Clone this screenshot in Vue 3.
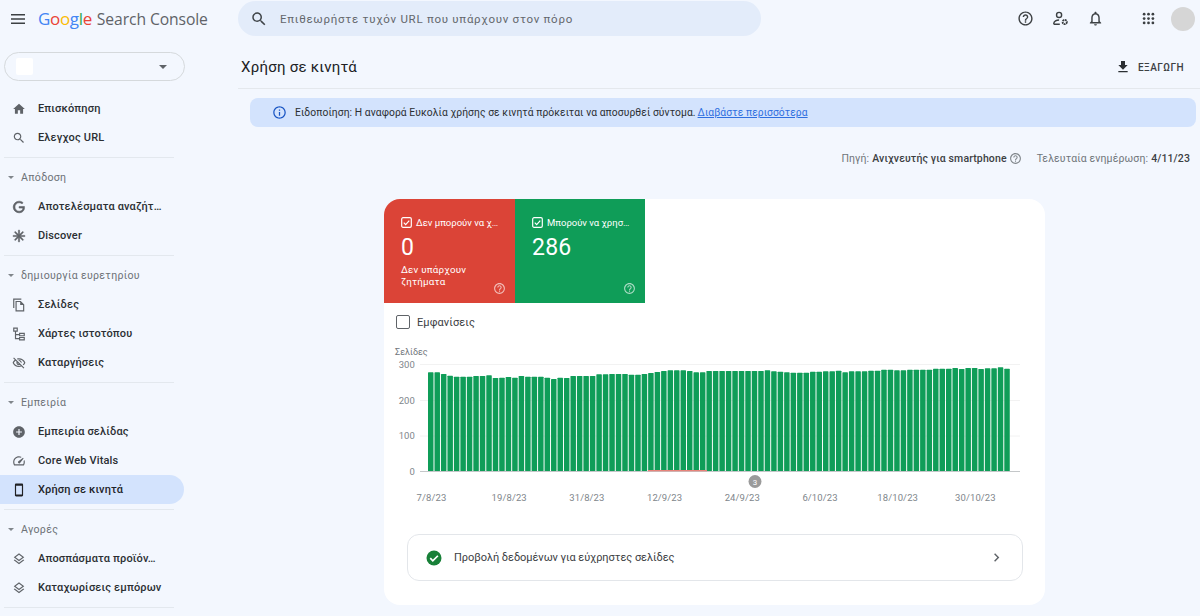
<script setup>
const I = {
  home: 'M10 20v-6h4v6h5v-8h3L12 3 2 12h3v8z',
  search: 'M15.5 14h-.79l-.28-.27C15.41 12.59 16 11.11 16 9.5 16 5.91 13.09 3 9.5 3S3 5.91 3 9.5 5.91 16 9.5 16c1.61 0 3.09-.59 4.23-1.57l.27.28v.79l5 4.99L20.49 19l-4.99-5zm-6 0C7.01 14 5 11.99 5 9.5S7.01 5 9.5 5 14 7.01 14 9.5 11.99 14 9.5 14z',
  g: 'M21.35 11.1h-9.17v2.73h6.51c-.33 3.81-3.5 5.44-6.5 5.44C8.36 19.27 5 16.25 5 12c0-4.1 3.2-7.27 7.2-7.27 3.09 0 4.9 1.97 4.9 1.97L19 4.72S16.56 2 12.1 2C6.42 2 2.03 6.8 2.03 12c0 5.05 4.13 10 10.22 10 5.35 0 9.25-3.67 9.25-9.09 0-1.15-.15-1.81-.15-1.81z',
  star: 'M11 2h2v7.6l5.4-5.4 1.4 1.4-5.4 5.4H22v2h-7.6l5.4 5.4-1.4 1.4-5.4-5.4V22h-2v-7.6l-5.4 5.4-1.4-1.4 5.4-5.4H2v-2h7.6L4.2 5.6l1.4-1.4L11 9.6z',
  copy: 'M16 1H2v16h2V3h12V1zm-1 4H6v18h15V11l-6-6zM8 21V7h6v5h5v9H8z',
  map: 'M2 1h8v7H7v4h5v-2h10v6H12v-2H7v5h5v-2h10v6H12v-2H5V8H2V1zm2 2v3h4V3H4zm10 9v2h6v-2h-6zm0 7v2h6v-2h-6z',
  eye: 'M12 6c3.79 0 7.17 2.13 8.82 5.5-.59 1.22-1.42 2.27-2.41 3.12l1.41 1.41c1.39-1.23 2.49-2.77 3.18-4.53C21.27 7.11 17 4 12 4c-1.27 0-2.49.2-3.64.57l1.65 1.65C10.66 6.09 11.32 6 12 6zm-1.07 1.14L13 9.21c.57.25 1.03.71 1.28 1.28l2.07 2.07c.08-.34.14-.7.14-1.07C16.5 9.01 14.48 7 12 7c-.37 0-.72.05-1.07.14zM2.01 3.87l2.68 2.68C3.06 7.83 1.77 9.53 1 11.5 2.73 15.89 7 19 12 19c1.52 0 2.98-.29 4.32-.82l3.42 3.42 1.41-1.41L3.42 2.45 2.01 3.87zm7.5 7.5l2.61 2.61c-.04.01-.08.02-.12.02-1.38 0-2.5-1.12-2.5-2.5 0-.05.01-.08.01-.13zm-3.4-3.4l1.75 1.75c-.23.55-.36 1.15-.36 1.78 0 2.48 2.02 4.5 4.5 4.5.63 0 1.23-.13 1.77-.36l.98.98c-.88.24-1.8.38-2.75.38-3.79 0-7.17-2.13-8.82-5.5.7-1.43 1.72-2.61 2.93-3.53z',
  add: 'M12 2C6.48 2 2 6.48 2 12s4.48 10 10 10 10-4.48 10-10S17.52 2 12 2zm5 11h-4v4h-2v-4H7v-2h4V7h2v4h4v2z',
  speed: 'M12 4C6.5 4 2 8.5 2 14c0 1.9.5 3.6 1.4 5.1l.3.4h16.6l.3-.4C21.5 17.600 22 15.900 22 14c0-1.300-.25-2.500-.7-3.600l-1.500 1.500c.130.650.200 1.350.200 2.100 0 1.300-.3 2.500-.9 3.500H4.900c-.600-1-.900-2.200-.900-3.500 0-4.400 3.600-8 8-8 1.100 0 2.100.2 3 .6l1.500-1.500C15.200 4.400 13.650 4 12 4zm6.900 2.500l-7.900 6.100a2 2 0 1 0 2.800 2.800l6.100-7.900-1-1z',
  phone: 'M17 1H7c-1.100 0-2 .9-2 2v18c0 1.100.9 2 2 2h10c1.100 0 2-.9 2-2V3c0-1.100-.9-2-2-2zm0 18.500H7v-15h10v15z',
  layers: 'M11.990 18.540l-7.370-5.730L3 14.070l9 7 9-7-1.630-1.270-7.380 5.740zM12 16l7.360-5.730L21 9l-9-7-9 7 1.630 1.270L12 16zm0-11.470L17.740 9 12 13.470 6.260 9 12 4.530z',
}
const sections = [
  { items: [['Επισκόπηση', 'home'], ['Ελεγχος URL', 'search']] },
  { title: 'Απόδοση', items: [['Αποτελέσματα αναζήτ…', 'g'], ['Discover', 'star']] },
  { title: 'δημιουργία ευρετηρίου', items: [['Σελίδες', 'copy'], ['Χάρτες ιστοτόπου', 'map'], ['Καταργήσεις', 'eye']] },
  { title: 'Εμπειρία', items: [['Εμπειρία σελίδας', 'add'], ['Core Web Vitals', 'speed'], ['Χρήση σε κινητά', 'phone', true]] },
  { title: 'Αγορές', items: [['Αποσπάσματα προϊόν…', 'layers'], ['Καταχωρίσεις εμπόρων', 'layers']] },
]
const tops = [97,97,102,107,110,110,110,108,108,106,114,113,111,113,108,110,110,110,113,117,113,114,108,108,108,108,103,103,102,102,102,104,104,102,99,96,93,91,91,91,93,97,97,93,93,
  93,93,93,93,93,93,93,91,94,95,97,98,98,98,95,95,94,94,92,97,94,94,94,92,92,89,89,91,91,89,89,89,89,86,86,86,84,87,84,84,87,85,85,82,86]
const bars = tops.map((t, i) => ({ x: 428 + i * 6.475, y: 364 + (t - 72) / 3, h: (393 - t) / 3 }))
const yLabels = [['300', 364], ['200', 400], ['100', 435.500], ['0', 471]]
const dates = ['7/8/23', '19/8/23', '31/8/23', '12/9/23', '24/9/23', '6/10/23', '18/10/23', '30/10/23']
const help = 'M11 18h2v-2h-2v2zm1-16C6.48 2 2 6.48 2 12s4.48 10 10 10 10-4.48 10-10S17.52 2 12 2zm0 18c-4.41 0-8-3.59-8-8s3.59-8 8-8 8 3.59 8 8-3.59 8-8 8zm0-14c-2.21 0-4 1.79-4 4h2c0-1.1.9-2 2-2s2 .9 2 2c0 2-3 1.75-3 5h2c0-2.25 3-2.5 3-5 0-2.21-1.79-4-4-4z'
const dots = [5, 12, 19].flatMap(y => [5, 12, 19].map(x => ({ x, y })))
</script>

<template>
  <div class="page">
    <header class="top">
      <div class="brand">
        <svg class="burger" viewBox="0 0 14 10"><path d="M0 0h14v1.500H0zM0 4.250h14v1.500H0zM0 8.500h14V10H0z" /></svg>
        <div class="logo">
          <span class="logo-g"><b class="c1">G</b><b class="c2">o</b><b class="c3">o</b><b class="c1">g</b><b class="c4">l</b><b class="c2">e</b></span>
          <span class="logo-s">Search Console</span>
        </div>
      </div>
      <div class="search">
        <svg class="search-i" viewBox="0 0 24 24"><path :d="I.search" /></svg>
        <span>Επιθεωρήστε τυχόν URL που υπάρχουν στον πόρο</span>
      </div>
      <div class="actions">
        <svg class="a-i" viewBox="0 0 24 24"><path :d="help" /></svg>
        <svg class="a-i manage" viewBox="0 0 24 24">
          <circle cx="10" cy="7" r="3.600" /><path d="M2.500 20v-1c0-3 4-5 7.500-5M2.500 20h8.500" />
          <circle cx="18" cy="17" r="3" stroke-width="2.600" stroke-dasharray="2.400 .8" />
        </svg>
        <svg class="a-i" viewBox="0 0 24 24"><path d="M12 22c1.100 0 2-.9 2-2h-4c0 1.100.9 2 2 2zm6-6v-5c0-3.070-1.630-5.640-4.500-6.320V4c0-.83-.67-1.500-1.500-1.500s-1.500.67-1.500 1.500v.68C7.640 5.360 6 7.920 6 11v5l-2 2v1h16v-1l-2-2zm-2 1H8v-6c0-2.480 1.510-4.500 4-4.500s4 2.020 4 4.500v6z" /></svg>
        <svg class="a-i apps" viewBox="0 0 24 24"><circle v-for="d in dots" :key="d.x + '-' + d.y" :cx="d.x" :cy="d.y" r="2.200" /></svg>
        <div class="avatar"></div>
      </div>
    </header>

    <div class="body">
      <aside class="side">
        <div class="prop">
          <span class="prop-box"></span>
          <span class="tri prop-tri"></span>
        </div>
        <nav class="nav">
          <section v-for="(s, si) in sections" :key="si" class="sec">
            <div v-if="s.title" class="sec-title"><span class="tri small"></span>{{ s.title }}</div>
            <a v-for="it in s.items" :key="it[0]" class="item" :class="{ active: it[2] }">
              <svg class="item-i" :class="{ bold: it[1] === 'g' || it[1] === 'star' }" viewBox="0 0 24 24"><path :d="I[it[1]]" /></svg>
              <span>{{ it[0] }}</span>
            </a>
          </section>
        </nav>
      </aside>

      <main class="main">
        <div class="title-row">
          <h1>Χρήση σε κινητά</h1>
          <div class="export">
            <svg viewBox="0 0 24 24"><path d="M19 9h-4V3H9v6H5l7 7 7-7zM5 18v2h14v-2H5z" /></svg>
            <span>ΕΞΑΓΩΓΗ</span>
          </div>
        </div>
        <div class="banner">
          <svg viewBox="0 0 24 24"><path d="M11 7h2v2h-2zm0 4h2v6h-2zm1-9C6.480 2 2 6.480 2 12s4.480 10 10 10 10-4.480 10-10S17.520 2 12 2zm0 18c-4.410 0-8-3.590-8-8s3.590-8 8-8 8 3.590 8 8-3.590 8-8 8z" /></svg>
          <span>Ειδοποίηση: Η αναφορά Ευκολία χρήσης σε κινητά πρόκειται να αποσυρθεί σύντομα.</span>
          <a>Διαβάστε περισσότερα</a>
        </div>
        <div class="source">
          <span class="muted">Πηγή:</span>
          <span class="dark">Ανιχνευτής για smartphone</span>
          <svg viewBox="0 0 24 24"><path :d="help" /></svg>
          <span class="muted upd">Τελευταία ενημέρωση:</span>
          <span class="dark">4/11/23</span>
        </div>

        <div class="card">
          <div class="tabs">
            <div class="tab red">
              <div class="tab-head">
                <svg viewBox="0 0 12 12"><rect x=".75" y=".75" width="10.500" height="10.500" rx="1.500" fill="none" stroke="#fff" stroke-width="1.300" /><path d="M3 6.200l2.100 2.100L9 4" fill="none" stroke="#fff" stroke-width="1.300" /></svg>
                <span>Δεν μπορούν να χ…</span>
              </div>
              <div class="num">0</div>
              <div class="note">Δεν υπάρχουν<br />ζητήματα</div>
              <svg class="tab-help" viewBox="0 0 24 24"><path :d="help" /></svg>
            </div>
            <div class="tab green">
              <div class="tab-head">
                <svg viewBox="0 0 12 12"><rect x=".75" y=".75" width="10.500" height="10.500" rx="1.500" fill="none" stroke="#fff" stroke-width="1.300" /><path d="M3 6.200l2.100 2.100L9 4" fill="none" stroke="#fff" stroke-width="1.300" /></svg>
                <span>Μπορούν να χρησ…</span>
              </div>
              <div class="num">286</div>
              <svg class="tab-help" viewBox="0 0 24 24"><path :d="help" /></svg>
            </div>
          </div>
          <div class="impr"><span class="cb"></span><span>Εμφανίσεις</span></div>
          <svg class="chart" viewBox="384 345 661 165">
            <text x="395" y="355" class="axis-title">Σελίδες</text>
            <g v-for="l in yLabels" :key="l[0]">
              <text :x="415" :y="l[1] + 3.500" text-anchor="end" class="tick">{{ l[0] }}</text>
              <line x1="420" x2="1020" :y1="l[1] + .5" :y2="l[1] + .5" :stroke="l[0] === '0' ? '#c4c7c9' : '#f2f2f2'" />
            </g>
            <rect v-for="(b, i) in bars" :key="i" :x="b.x" :y="b.y" width="5.500" :height="b.h" rx=".6" fill="#0f9d58" />
            <rect x="648" y="470" width="59" height="1.300" fill="#e8837a" />
            <circle cx="755" cy="481.500" r="6.500" fill="#9b9b9b" />
            <text x="755" y="484.500" text-anchor="middle" class="mark">3</text>
            <text v-for="(d, i) in dates" :key="d" :x="431.500 + i * 77.700" y="501" text-anchor="middle" class="tick">{{ d }}</text>
          </svg>
          <div class="link">
            <svg class="ok" viewBox="0 0 24 24"><circle cx="12" cy="12" r="10" fill="#188038" /><path d="M7 12.300l3.400 3.400L17.200 9" fill="none" stroke="#fff" stroke-width="2.300" /></svg>
            <span>Προβολή δεδομένων για εύχρηστες σελίδες</span>
            <svg class="chev" viewBox="0 0 24 24"><path d="M10 6L8.590 7.410 13.170 12l-4.580 4.590L10 18l6-6z" /></svg>
          </div>
        </div>
      </main>
    </div>
  </div>
</template>

<style scoped>
.page { width: 1200px; height: 616px; overflow: hidden; background: #f3f7fe; color: #202124; font-family: Roboto, "Noto Sans", sans-serif; }
.top { height: 37px; display: flex; align-items: center; }
.brand { width: 238px; display: flex; align-items: center; padding-left: 11px; box-sizing: border-box; }
.burger { width: 14px; height: 10px; fill: #3c4043; margin-right: 13px; }
.logo { display: flex; align-items: baseline; font-family: "Open Sans", sans-serif; white-space: nowrap; }
.logo-g { font-size: 17px; letter-spacing: -.35px; margin-right: 5px; }
.logo-g b { font-weight: 500; }
.c1 { color: #4285f4; } .c2 { color: #ea4335; } .c3 { color: #fbbc05; } .c4 { color: #34a853; }
.logo-s { font-size: 15.700px; color: #5f6368; letter-spacing: -.1px; }
.search { width: 523px; height: 35px; background: #e3ecfa; border-radius: 18px; display: flex; align-items: center; font-size: 11.500px; color: #63676c; letter-spacing: .72px; white-space: nowrap; }
.search-i { width: 18px; height: 18px; fill: #3f4448; margin: 0 12px 0 12px; }
.actions { margin-left: auto; display: flex; align-items: center; }
.a-i { width: 17px; height: 17px; fill: #3c4043; margin-right: 18px; }
.manage { fill: none; stroke: #3c4043; stroke-width: 2; }
.apps { margin: 0 15px 0 19px; width: 15px; height: 15px; }
.avatar { width: 24px; height: 24px; border-radius: 50%; background: #d6d6d6; margin-right: 5px; }
.body { display: flex; }
.side { width: 238px; flex: none; }
.prop { margin: 15px 0 0 4px; width: 181px; height: 29px; box-sizing: border-box; border: 1px solid #d5d9dc; border-radius: 15px; display: flex; align-items: center; padding: 0 17px 0 11px; justify-content: space-between; }
.prop-box { width: 17px; height: 17px; background: #fff; border-radius: 2px; }
.tri { width: 0; height: 0; border-left: 4px solid transparent; border-right: 4px solid transparent; border-top: 4px solid #5f6368; display: block; }
.tri.small { border-width: 3px 3px 0; margin-right: 7px; border-top-color: #80868b; }
.nav { margin-top: 13px; width: 184px; }
.sec { padding: 0 0 6px; position: relative; margin-bottom: 5px; }
.sec::after { content: ""; display: block; position: absolute; left: 4px; width: 170px; bottom: 0; height: 1px; background: #e3e8ee; }
.sec-title { height: 29px; display: flex; align-items: center; padding-left: 8px; font-size: 10.600px; letter-spacing: .3px; color: #6d7277; white-space: nowrap; }
.item { height: 29px; display: flex; align-items: center; padding-left: 12px; font-size: 11px; font-weight: 500; letter-spacing: .15px; color: #2b2f33; border-radius: 0 15px 15px 0; white-space: nowrap; }
.item.active { background: #d3e3fd; color: #1f2328; }
.item-i { width: 14px; height: 14px; fill: #5f6368; margin-right: 12px; flex: none; }
.item-i.bold path { stroke: #5f6368; stroke-width: 1; }
.item.active .item-i { fill: #202124; }
.main { flex: 1; min-width: 0; }
.title-row { height: 52px; box-sizing: border-box; padding: 9px 16px 0 3px; display: flex; align-items: center; justify-content: space-between; border-bottom: 1px solid #e4e8ed; }
h1 { margin: 0; font-size: 15px; font-weight: 400; letter-spacing: .25px; color: #202124; }
.export { display: flex; align-items: center; font-size: 10px; font-weight: 500; letter-spacing: .45px; color: #3c4043; }
.export svg { width: 16px; height: 16px; fill: #2b2f33; margin-right: 7px; }
.banner { margin: 9px 4px 0 12px; height: 29px; background: #d3e3fd; border-radius: 8px; display: flex; align-items: center; font-size: 10.300px; letter-spacing: .08px; color: #2b2f33; padding-left: 22px; white-space: nowrap; }
.banner svg { width: 15px; height: 15px; fill: #1a56c4; margin-right: 8px; flex: none; }
.banner a { color: #2f6fe0; text-decoration: underline; margin-left: 2px; }
.source { height: 16px; margin-top: 23px; padding-right: 10px; display: flex; align-items: center; justify-content: flex-end; font-size: 10.500px; letter-spacing: .12px; }
.source svg { width: 13px; height: 13px; fill: #80868b; margin-left: 2px; }
.muted { color: #70757a; margin-right: 3px; }
.upd { margin-left: 15px; }
.dark { color: #3c4043; font-weight: 500; }
.card { margin: 33px 0 0 146px; width: 661px; height: 406px; background: #fff; border-radius: 16px; overflow: hidden; }
.tabs { display: flex; height: 104px; }
.tab { width: 130px; height: 104px; box-sizing: border-box; padding: 18px 0 0 17px; color: #fff; position: relative; }
.red { background: #db4437; width: 131px; }
.green { background: #0f9d58; }
.tab-head { display: flex; align-items: center; font-size: 9.500px; letter-spacing: 0; white-space: nowrap; }
.tab-head svg { width: 11px; height: 11px; margin-right: 4px; flex: none; }
.num { font-size: 23px; line-height: 28px; margin-top: 6px; letter-spacing: .2px; }
.note { font-size: 9.800px; line-height: 12px; margin-top: 2px; letter-spacing: .2px; }
.tab-help { position: absolute; right: 9px; bottom: 8px; width: 13px; height: 13px; fill: rgba(255, 255, 255, .65); }
.impr { display: flex; align-items: center; height: 20px; margin: 9px 0 0 12px; font-size: 11px; letter-spacing: .1px; color: #3c4043; }
.cb { width: 12px; height: 12px; border: 1.500px solid #5f6368; border-radius: 2px; margin-right: 7px; }
.chart { display: block; width: 661px; height: 165px; margin-top: 13px; }
.axis-title { font-size: 9px; fill: #70757a; }
.tick { font-size: 9.500px; fill: #80868b; letter-spacing: .1px; }
.mark { font-size: 8px; fill: #fff; }
.link { margin: 24px 0 0 23px; width: 616px; height: 47px; box-sizing: border-box; border: 1px solid #e3e6ea; border-radius: 12px; display: flex; align-items: center; padding: 0 17px; font-size: 11px; letter-spacing: -.05px; color: #3c4043; }
.ok { width: 18px; height: 18px; margin-right: 11px; }
.chev { width: 17px; height: 17px; fill: #5f6368; margin-left: auto; }
</style>
